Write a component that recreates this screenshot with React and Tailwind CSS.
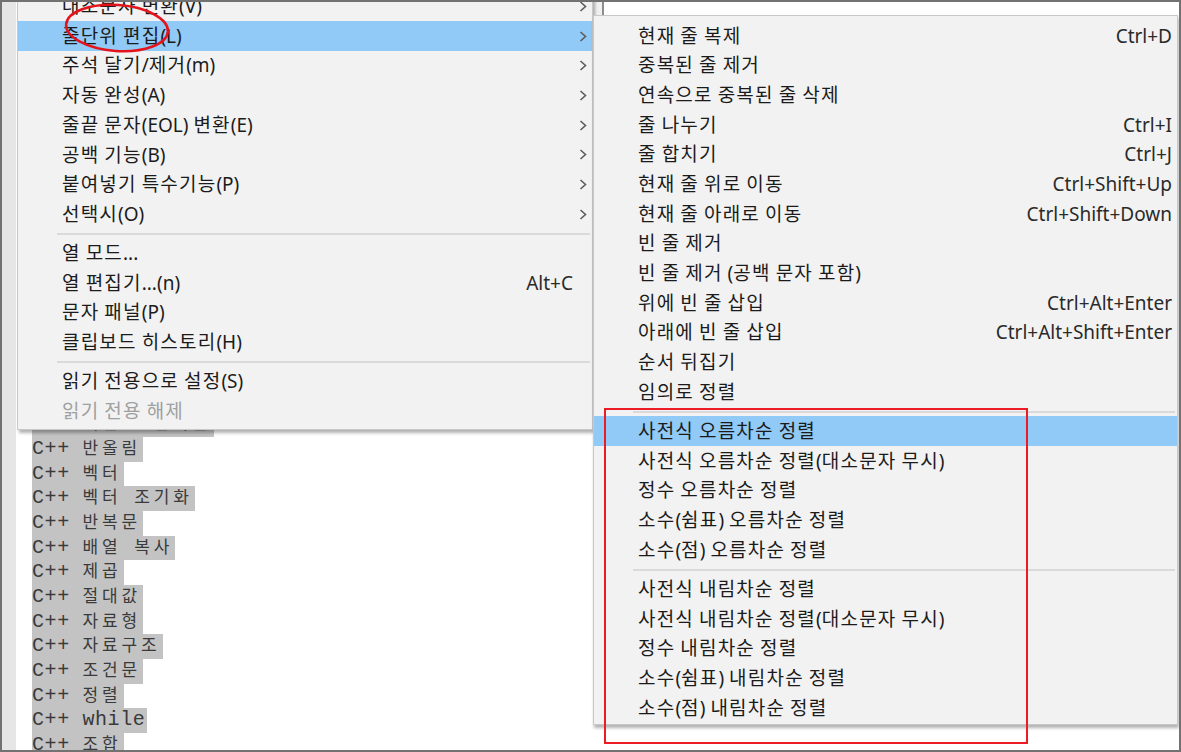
import React from 'react';
import clsx from 'clsx';

// Edit menu (partly scrolled off) with the "줄단위 편집" submenu open over an editor selection.

const leftItems = [
  { label: '대소문자 변환(V)', arrow: true },
  { label: '줄단위 편집(L)', arrow: true, active: true },
  { label: '주석 달기/제거(m)', arrow: true },
  { label: '자동 완성(A)', arrow: true },
  { label: '줄끝 문자(EOL) 변환(E)', arrow: true },
  { label: '공백 기능(B)', arrow: true },
  { label: '붙여넣기 특수기능(P)', arrow: true },
  { label: '선택시(O)', arrow: true },
  'sep',
  { label: '열 모드...' },
  { label: '열 편집기...(n)', shortcut: 'Alt+C' },
  { label: '문자 패널(P)' },
  { label: '클립보드 히스토리(H)' },
  'sep',
  { label: '읽기 전용으로 설정(S)' },
  { label: '읽기 전용 해제', disabled: true },
];

const subItems = [
  { label: '현재 줄 복제', shortcut: 'Ctrl+D' },
  { label: '중복된 줄 제거' },
  { label: '연속으로 중복된 줄 삭제' },
  { label: '줄 나누기', shortcut: 'Ctrl+I' },
  { label: '줄 합치기', shortcut: 'Ctrl+J' },
  { label: '현재 줄 위로 이동', shortcut: 'Ctrl+Shift+Up' },
  { label: '현재 줄 아래로 이동', shortcut: 'Ctrl+Shift+Down' },
  { label: '빈 줄 제거' },
  { label: '빈 줄 제거 (공백 문자 포함)' },
  { label: '위에 빈 줄 삽입', shortcut: 'Ctrl+Alt+Enter' },
  { label: '아래에 빈 줄 삽입', shortcut: 'Ctrl+Alt+Shift+Enter' },
  { label: '순서 뒤집기' },
  { label: '임의로 정렬' },
  'sep',
  { label: '사전식 오름차순 정렬', active: true },
  { label: '사전식 오름차순 정렬(대소문자 무시)' },
  { label: '정수 오름차순 정렬' },
  { label: '소수(쉼표) 오름차순 정렬' },
  { label: '소수(점) 오름차순 정렬' },
  'sep',
  { label: '사전식 내림차순 정렬' },
  { label: '사전식 내림차순 정렬(대소문자 무시)' },
  { label: '정수 내림차순 정렬' },
  { label: '소수(쉼표) 내림차순 정렬' },
  { label: '소수(점) 내림차순 정렬' },
];

// lines above the visible ones sit behind the menu
const codeLines = [
  'C++ 문자열 비교',
  'C++ 문자열 자르기',
  'C++ 문자열 찾기',
  'C++ 문자열 변환',
  'C++ 포인터',
  'C++ 참조자',
  'C++ 구조체',
  'C++ 클래스',
  'C++ 상속',
  'C++ 템플릿',
  'C++ 맵',
  'C++ 셋',
  'C++ 큐',
  'C++ 스택',
  'C++ 난수',
  'C++ 랜덤 함수',
  'C++ 배열 오름차순',
  'C++ 반올림',
  'C++ 벡터',
  'C++ 벡터 조기화',
  'C++ 반복문',
  'C++ 배열 복사',
  'C++ 제곱',
  'C++ 절대값',
  'C++ 자료형',
  'C++ 자료구조',
  'C++ 조건문',
  'C++ 정렬',
  'C++ while',
  'C++ 조합',
];

const HANGUL = /([가-힣]+)/;

// hangul runs get a little extra tracking so they run as wide as Malgun Gothic
function Label({ text }) {
  return text.split(HANGUL).map((part, i) =>
    HANGUL.test(part) ? (
      <span key={i} className="tracking-[1.2px]">{part}</span>
    ) : (
      part
    )
  );
}

// editor font: ascii half width, hangul full width cells
function CodeText({ text }) {
  return text.split(HANGUL).map((part, i) =>
    HANGUL.test(part) ? (
      <span key={i} className="text-[17px] tracking-[3.9px]">{part}</span>
    ) : (
      part
    )
  );
}

function Chevron() {
  return (
    <svg width="8" height="11" viewBox="0 0 8 11" className="block">
      <polyline points="1.5,1 6.5,5.5 1.5,10" fill="none" stroke="#5c5c5c" strokeWidth="1.6" />
    </svg>
  );
}

function Separator() {
  return (
    <div className="flex h-[9.5px] items-center pl-[39px] pr-[2px]">
      <div className="h-[2px] w-full bg-[#dadada]" />
    </div>
  );
}

function MenuRow({ item, withArrowCol }) {
  return (
    <div
      className={clsx(
        'flex h-[29.7px] items-center whitespace-nowrap',
        item.active && 'bg-[#91c9f7]',
        item.disabled ? 'text-[#a0a0a0]' : 'text-[#1b1b1b]'
      )}
    >
      <span className="flex-1 pl-[44px]">
        <Label text={item.label} />
      </span>
      {item.shortcut && <span className="text-[#2a2a2a]">{item.shortcut}</span>}
      {withArrowCol ? (
        <span className="flex w-[19px] justify-center">{item.arrow && <Chevron />}</span>
      ) : (
        <span className="w-[5px]" />
      )}
    </div>
  );
}

function Menu({ items, withArrowCol }) {
  return items.map((it, i) =>
    it === 'sep' ? <Separator key={i} /> : <MenuRow key={i} item={it} withArrowCol={withArrowCol} />
  );
}

export default function App() {
  return (
    <div
      className="relative h-[752px] w-[1181px] overflow-hidden bg-white"
      style={{ fontFamily: '"Noto Sans", "Noto Sans CJK KR", sans-serif' }}
    >
      {/* editor */}
      <div className="flex h-full">
        <div className="w-[16px] bg-[#e6e6e6]" />
        <div
          className="flex-1 pl-[16px] pt-[17.2px] text-[20px] tracking-[0.6px] text-[#3a3a3a]"
          style={{ fontFamily: '"Liberation Mono", "Noto Sans CJK KR", monospace' }}
        >
          {codeLines.map((l, i) => (
            <div key={i} className="flex h-[24.7px]">
              <span className="block h-full whitespace-pre bg-[#c3c3c3] pr-[2px] leading-[24.7px]">
                <CodeText text={l} />
              </span>
            </div>
          ))}
        </div>
      </div>

      {/* bit of the window behind, top between the menus */}
      <div className="absolute left-[593px] top-0 h-[16px] w-[11px] border-r-2 border-[#8c8c8c] bg-[#f0f0f0]" />

      {/* edit menu */}
      <div className="absolute left-[17px] top-[-9.5px] w-[576px] border border-[#c8c8c8] bg-[#f2f2f2] pb-[3px] text-[19px] shadow-[2px_3px_3px_rgba(0,0,0,0.3)]">
        <Menu items={leftItems} withArrowCol />
      </div>

      {/* line operations submenu */}
      <div className="absolute left-[593px] top-[15px] w-[585px] border border-[#c8c8c8] bg-[#f2f2f2] pb-[1.5px] pt-[5px] text-[19px] shadow-[1px_3px_3px_rgba(0,0,0,0.3)]">
        <Menu items={subItems} />
      </div>

      {/* annotations */}
      <div className="absolute left-[604px] top-[408px] h-[336px] w-[424px] border-2 border-[#ed1c24]" />
      <svg className="absolute left-0 top-0" width="240" height="70" viewBox="0 0 240 70">
        <ellipse cx="117" cy="28" rx="51" ry="23" fill="none" stroke="#e3141c" strokeWidth="2.5" transform="rotate(4 117 28)" />
      </svg>

      {/* screenshot frame */}
      <div className="pointer-events-none absolute inset-0 border-2 border-[#727272]" />
    </div>
  );
}
